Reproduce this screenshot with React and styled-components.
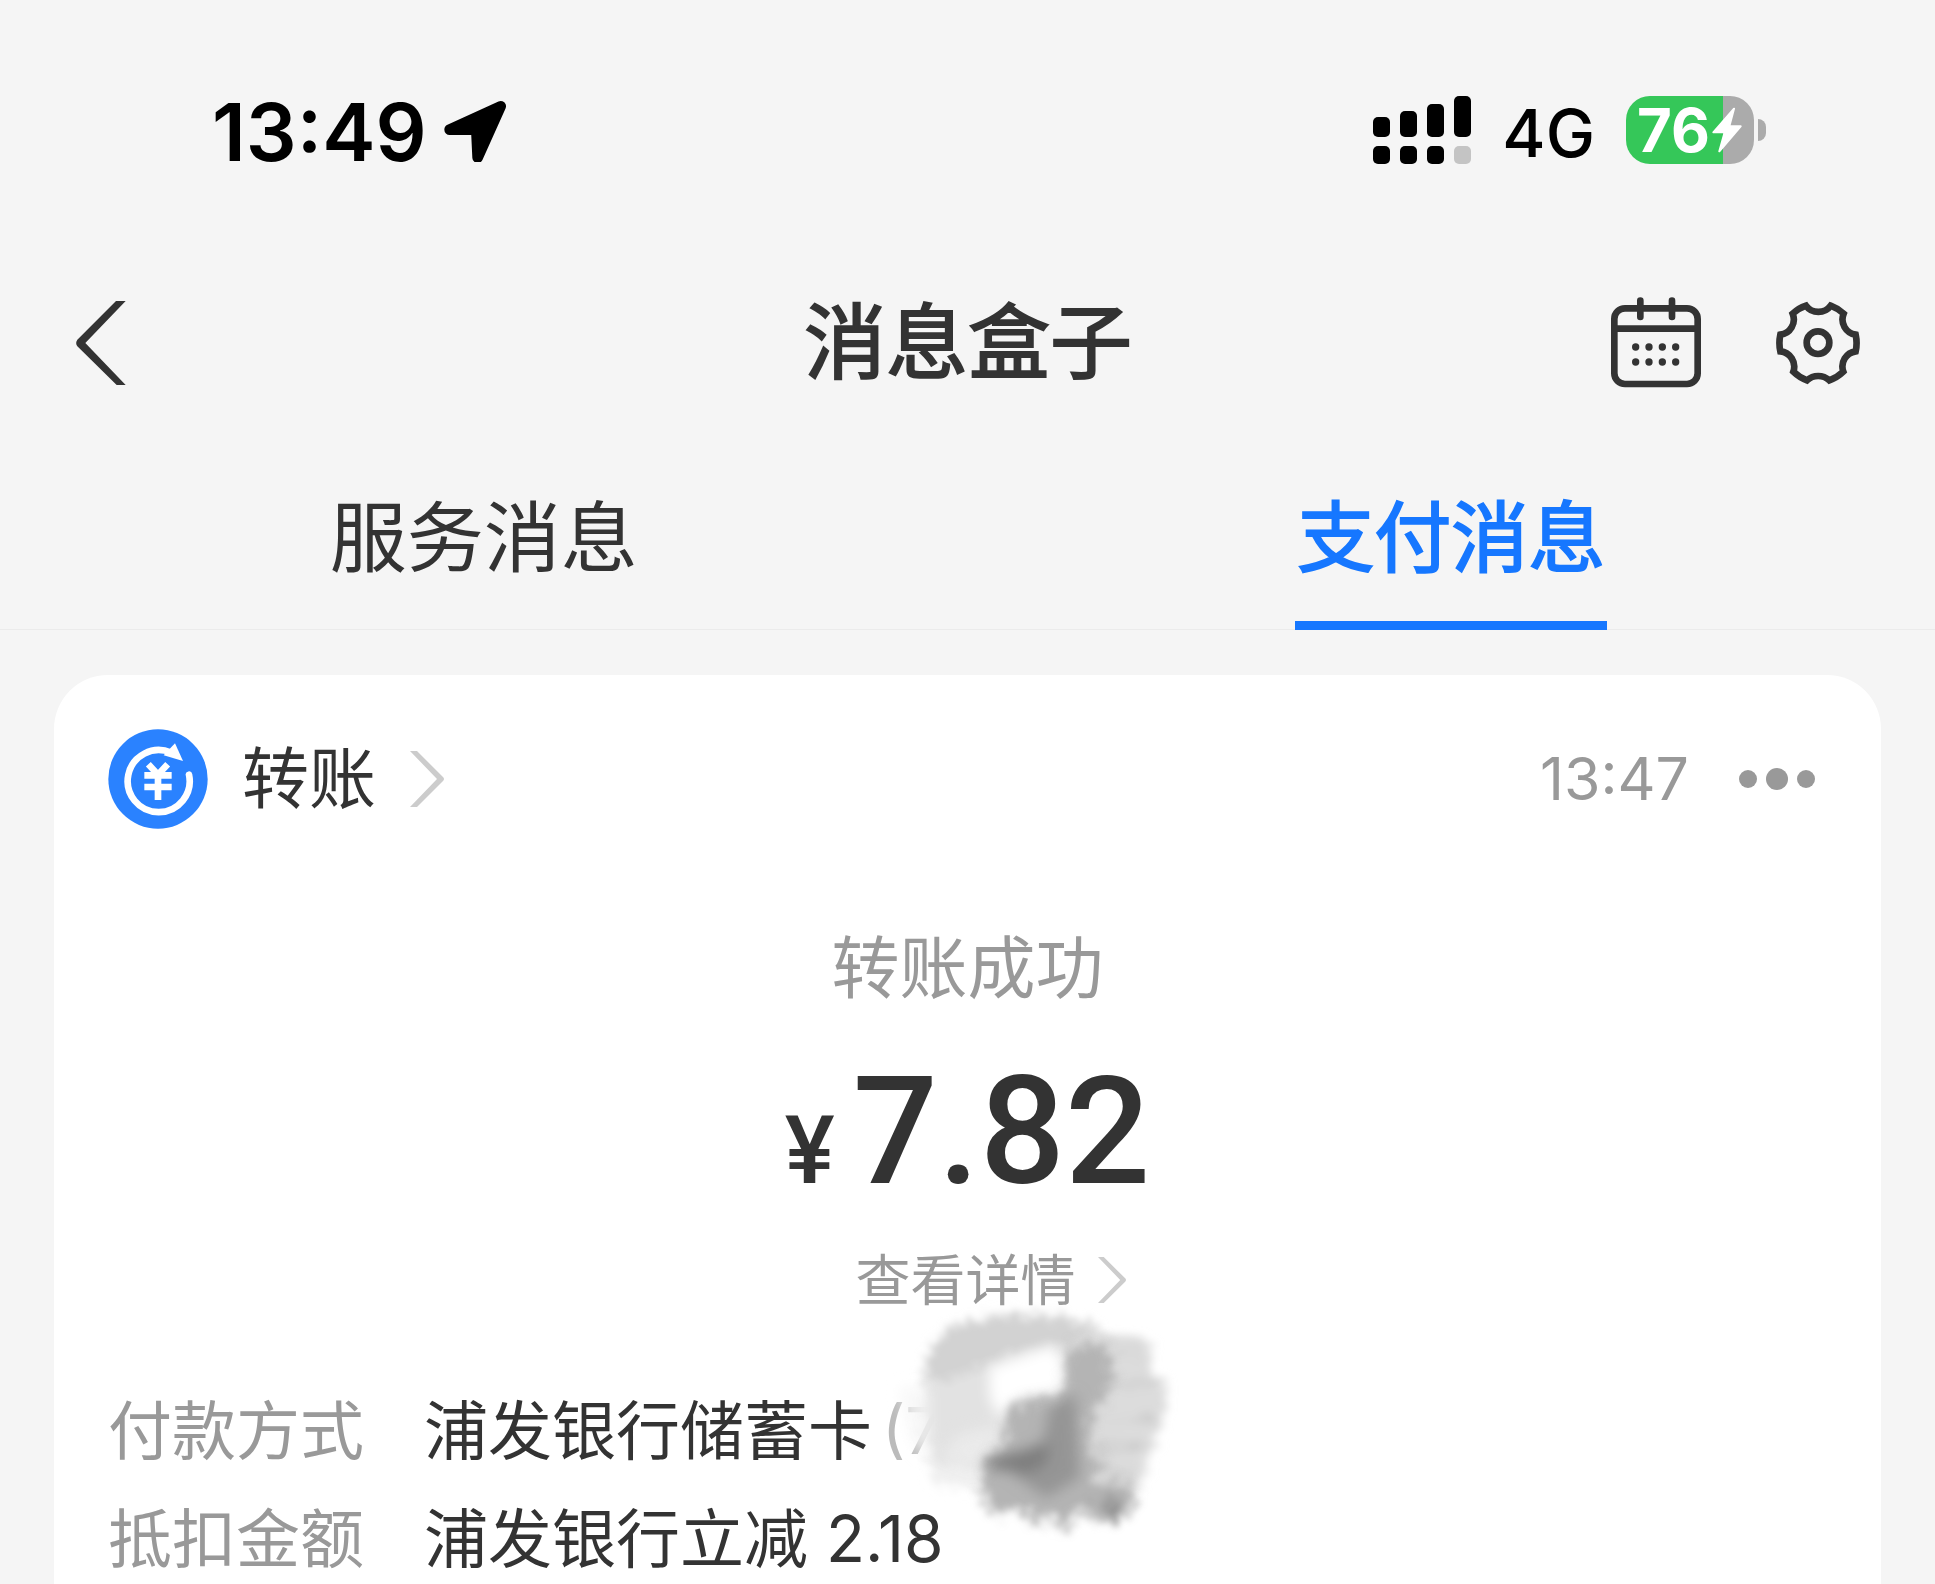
import React, { useState } from "react"
import styled, { createGlobalStyle } from "styled-components"

const tabs = ["服务消息", "支付消息"]

export default function App() {
  const [activeTab, setActiveTab] = useState("支付消息")
  return (
    <Page>
      <GlobalStyle />
      <StatusBar>
        <StatusGroup $gap={16}>
          <Clock>13:49</Clock>
          <LocationIcon />
        </StatusGroup>
        <StatusGroup $gap={31}>
          <SignalIcon />
          <Network>4G</Network>
          <Battery />
        </StatusGroup>
      </StatusBar>
      <NavBar>
        <NavSide>
          <IconButton aria-label="返回">
            <BackIcon />
          </IconButton>
        </NavSide>
        <Title>消息盒子</Title>
        <NavSide $end>
          <IconButton aria-label="日历">
            <CalendarIcon />
          </IconButton>
          <IconButton aria-label="设置">
            <GearIcon />
          </IconButton>
        </NavSide>
      </NavBar>
      <TabBar role="tablist">
        {tabs.map(tab => (
          <TabCell key={tab}>
            <Tab
              role="tab"
              aria-selected={tab === activeTab}
              $active={tab === activeTab}
              onClick={() => setActiveTab(tab)}
            >
              {tab}
            </Tab>
          </TabCell>
        ))}
      </TabBar>
      <MessageCard />
    </Page>
  )
}

function MessageCard() {
  return (
    <Card>
      <CardHeader>
        <Source href="#transfer">
          <TransferIcon />
          <span>转账</span>
          <Chevron width={34} height={58} />
        </Source>
        <Time>13:47</Time>
        <IconButton aria-label="更多">
          <MoreIcon />
        </IconButton>
      </CardHeader>
      <Result>转账成功</Result>
      <Amount>
        <Currency>¥</Currency>
        <span>7.82</span>
      </Amount>
      <Detail href="#detail">
        <span>查看详情</span>
        <Chevron width={28} height={48} />
      </Detail>
      <Fields>
        <Field>
          <dt>付款方式</dt>
          <dd>
            浦发银行储蓄卡
            <CardTail>
              (7
              <Smudge />
            </CardTail>
          </dd>
        </Field>
        <Field>
          <dt>抵扣金额</dt>
          <dd>浦发银行立减 2.18</dd>
        </Field>
      </Fields>
    </Card>
  )
}

function LocationIcon() {
  return (
    <svg width="64" height="64" viewBox="-2 -7 192 192" aria-hidden="true">
      <path
        d="M18 88 171 18 102 172 98 88Z"
        fill="#000"
        stroke="#000"
        strokeWidth="32"
        strokeLinejoin="round"
      />
    </svg>
  )
}

function SignalIcon() {
  const bars = [
    { x: 0, top: 21 },
    { x: 27, top: 15 },
    { x: 54, top: 8 },
    { x: 81, top: 0 },
  ]
  return (
    <svg width="98" height="68" viewBox="0 0 98 68" aria-hidden="true">
      {bars.map(({ x, top }, i) => (
        <g key={x}>
          <rect x={x} y={top} width="17" height={41 - top} rx="5" />
          <rect
            x={x}
            y="50"
            width="17"
            height="18"
            rx="5"
            fill={i === 3 ? "#c4c4c4" : "#000"}
          />
        </g>
      ))}
    </svg>
  )
}

function Battery() {
  return (
    <BatteryWrap>
      <BatteryBody>
        <span>76</span>
        <svg width="30" height="46" viewBox="0 0 90 138" aria-hidden="true">
          <path
            d="M66 5 4 76H38L22 133 86 58H52L66 5Z"
            fill="#fff"
            stroke="#fff"
            strokeWidth="6"
            strokeLinejoin="round"
          />
        </svg>
      </BatteryBody>
      <BatteryNub />
    </BatteryWrap>
  )
}

function BackIcon() {
  return (
    <svg width="50" height="84" viewBox="0 0 150 252" aria-hidden="true">
      <path
        d="M120 0H149L28 126 149 252H122L4 136Q-3 126 4 116Z"
        fill="#333"
      />
    </svg>
  )
}

function CalendarIcon() {
  return (
    <svg width="92" height="92" viewBox="90 80 276 276" aria-hidden="true">
      <g fill="none" stroke="#333" strokeWidth="20">
        <rect x="103" y="114" width="250" height="227" rx="32" />
        <path d="M103 175H352" />
        <path d="M181 91V140M276 91V140" strokeLinecap="round" />
      </g>
      {[230, 275].map(cy =>
        [167, 207, 247, 287].map(cx => (
          <circle key={`${cx}-${cy}`} cx={cx} cy={cy} r="11" fill="#333" />
        ))
      )}
    </svg>
  )
}

function GearIcon() {
  return (
    <svg width="84" height="84" viewBox="587 92 252 252" aria-hidden="true">
      <g fill="none" stroke="#333" strokeWidth="20">
        <path d="M677 106A46 46 0 0 0 751 106A116 116 0 0 1 790 130A46 46 0 0 0 826 193A116 116 0 0 1 826 243A46 46 0 0 0 789 304A116 116 0 0 1 747 330A50 50 0 0 0 680 330A116 116 0 0 1 639 304A46 46 0 0 0 600 243A116 116 0 0 1 600 193A46 46 0 0 0 637 130A116 116 0 0 1 677 106Z" />
        <circle cx="713" cy="217" r="34" />
      </g>
    </svg>
  )
}

function TransferIcon() {
  return (
    <svg width="100" height="100" viewBox="173 175 300 300" aria-hidden="true">
      <circle cx="323" cy="325" r="149" fill="#2a82ff" />
      <path
        d="M416 312A93 93 0 1 1 362 246"
        fill="none"
        stroke="#fff"
        strokeWidth="20"
        strokeLinecap="round"
      />
      <path d="M374 218 398 271 340 254Z" fill="#fff" />
      <path
        d="M294 281 323 312 352 281M323 308V388M282 314H364M282 349H364"
        fill="none"
        stroke="#fff"
        strokeWidth="20"
      />
    </svg>
  )
}

function Chevron({ width, height }) {
  return (
    <svg width={width} height={height} viewBox="0 0 34 58" aria-hidden="true">
      <path d="M0 1H7L33 27Q35 29 33 31L7 57H0L27 29Z" fill="#ccc" />
    </svg>
  )
}

function MoreIcon() {
  return (
    <svg width="76" height="22" viewBox="0 0 76 22" fill="#999" aria-hidden="true">
      <circle cx="9" cy="11" r="9" />
      <circle cx="38" cy="11" r="11" />
      <circle cx="67" cy="11" r="9" />
    </svg>
  )
}

// Finger-painted smear that hides the card number
function Smudge() {
  return (
    <SmudgeSvg viewBox="0 0 1080 810" aria-hidden="true">
      <defs>
        <filter id="rough" x="-20%" y="-20%" width="140%" height="140%">
          <feTurbulence
            type="fractalNoise"
            baseFrequency="0.05 0.06"
            numOctaves="3"
            seed="4"
          />
          <feDisplacementMap
            in="SourceGraphic"
            scale="110"
            xChannelSelector="R"
            yChannelSelector="G"
          />
          <feGaussianBlur stdDeviation="11" />
        </filter>
        <filter id="streak" x="-20%" y="-20%" width="140%" height="140%">
          <feTurbulence
            type="fractalNoise"
            baseFrequency="0.008 0.06"
            numOctaves="2"
            seed="9"
          />
          <feDisplacementMap
            in="SourceGraphic"
            scale="90"
            xChannelSelector="R"
            yChannelSelector="G"
          />
          <feGaussianBlur stdDeviation="12" />
        </filter>
        <filter id="soft" x="-40%" y="-40%" width="180%" height="180%">
          <feGaussianBlur stdDeviation="20" />
        </filter>
      </defs>
      <g filter="url(#rough)">
        <path
          d="M225 310 235 290 245 200 300 130 450 90 620 90 750 125 780 170V560H420L260 540 235 480Z"
          fill="#e2e2e2"
        />
        <path
          d="M235 290 250 200 300 130 450 95 620 95 750 130 700 210 620 180 440 230 340 280Z"
          fill="#d2d2d2"
        />
        <path d="M250 540H410V620L260 600Z" fill="#f0f0f0" />
      </g>
      <g filter="url(#streak)">
        <path
          d="M690 160 900 160 930 280 965 350 930 430 900 560 860 640 700 600Z"
          fill="#dcdcdc"
        />
        <path
          d="M720 190H880V205H720ZM740 300H920V312H740ZM760 400H930V412H760ZM720 480H900V494H720ZM740 560H870V572H740Z"
          fill="#ccc"
        />
      </g>
      <g filter="url(#soft)">
        <path d="M160 310H250V530L200 480Z" fill="#f6f6f6" opacity="0.8" />
        <path d="M430 250 620 185 655 240 650 320 520 340 460 400 430 340Z" fill="#fff" />
        <path d="M340 450 470 420 430 510 390 560 280 520Z" fill="#eaeaea" />
      </g>
      <g filter="url(#rough)">
        <path
          d="M665 190 780 180 800 300 740 400 720 480 800 580 870 620 850 690 780 720 710 680 650 755 620 690 570 730 530 680 430 690 405 600 410 530 480 490 475 400 530 345 650 340Z"
          fill="#b4b4b4"
        />
        <path d="M735 570H790V600H735Z" fill="#dadada" />
        <path d="M590 690H620V740H590ZM680 680H710V710H680Z" fill="#f4f4f4" />
        <path d="M750 660 830 640 800 720Z" fill="#8c8c8c" />
      </g>
      <g filter="url(#soft)">
        <path d="M610 370 690 330 700 580 600 640 500 570 590 480Z" fill="#959595" />
        <path d="M530 500 610 470 600 540 540 570 420 550 430 520Z" fill="#7e7e7e" />
      </g>
    </SmudgeSvg>
  )
}

const GlobalStyle = createGlobalStyle`
  * {
    box-sizing: border-box;
  }

  body {
    margin: 0;
    background: #f5f5f5;
    color: #333;
    font-family: Inter, "Noto Sans CJK SC", sans-serif;
  }

  svg {
    display: block;
    flex: none;
  }
`

const Page = styled.div`
  display: flex;
  flex-direction: column;
  min-height: 100vh;
`

const StatusBar = styled.header`
  display: flex;
  justify-content: space-between;
  align-items: center;
  height: 240px;
  padding: 20px 169px 0 212px;
  color: #000;
`

const StatusGroup = styled.div`
  display: flex;
  align-items: center;
  gap: ${({ $gap }) => $gap}px;
`

const Clock = styled.span`
  padding-top: 4px;
  font-size: 80px;
  font-weight: 600;
  line-height: 80px;
`

const Network = styled.span`
  padding-top: 6px;
  font-size: 66px;
  font-weight: 500;
  line-height: 80px;
`

const BatteryWrap = styled.div`
  display: flex;
  align-items: center;
  gap: 4px;
`

const BatteryBody = styled.div`
  display: flex;
  align-items: center;
  gap: 2px;
  width: 128px;
  height: 68px;
  padding-left: 11px;
  border-radius: 24px;
  background: linear-gradient(to right, #35c759 76%, #ababab 76%);
  color: #fff;
  font-size: 60px;
  font-weight: 700;
  line-height: 68px;
`

const BatteryNub = styled.div`
  width: 8px;
  height: 22px;
  border-radius: 0 8px 8px 0;
  background: #ababab;
`

const NavBar = styled.nav`
  display: grid;
  grid-template-columns: 1fr auto 1fr;
  align-items: center;
  height: 204px;
  padding: 1px 75px 0 76px;
`

const NavSide = styled.div`
  display: flex;
  justify-content: ${({ $end }) => ($end ? "flex-end" : "flex-start")};
  align-items: center;
  gap: 74px;
`

const IconButton = styled.button`
  display: flex;
  padding: 0;
  border: none;
  background: none;
  cursor: pointer;
`

const Title = styled.h1`
  margin: 0;
  font-size: 82px;
  font-weight: 400;
  line-height: 100px;
  -webkit-text-stroke: 2px currentColor;
`

const TabBar = styled.div`
  display: grid;
  grid-template-columns: 1fr 1fr;
  height: 186px;
  border-bottom: 1px solid #ebebeb;
`

const TabCell = styled.div`
  display: flex;
  justify-content: center;
`

const Tab = styled.button`
  height: 186px;
  padding: 11px 2px 0;
  border: none;
  border-bottom: 9px solid ${({ $active }) => ($active ? "#1677ff" : "transparent")};
  background: none;
  color: ${({ $active }) => ($active ? "#1677ff" : "#333")};
  font-family: inherit;
  font-size: 77px;
  font-weight: 400;
  line-height: 100px;
  -webkit-text-stroke: ${({ $active }) => ($active ? 2 : 0)}px currentColor;
  cursor: pointer;
`

const Card = styled.main`
  display: flex;
  flex: 1;
  flex-direction: column;
  margin: 45px 54px 0;
  padding: 54px 54px 0;
  border-radius: 54px 54px 0 0;
  background: #fff;
`

const CardHeader = styled.div`
  display: flex;
  align-items: center;
  height: 100px;
  padding-right: 12px;
`

const Source = styled.a`
  display: flex;
  align-items: center;
  gap: 34px;
  margin-right: auto;
  color: #333;
  font-size: 67px;
  line-height: 100px;
  text-decoration: none;
`

const Time = styled.time`
  margin-right: 50px;
  color: #999;
  font-size: 59px;
  line-height: 100px;
`

const Result = styled.p`
  margin: 91px 0 0;
  color: #999;
  font-size: 68px;
  line-height: 96px;
  text-align: center;
`

const Amount = styled.p`
  display: flex;
  justify-content: center;
  align-items: baseline;
  gap: 18px;
  height: 224px;
  margin: 0;
  font-family: Roboto, sans-serif;
  font-size: 150px;
  font-weight: 500;
  line-height: 232px;
`

const Currency = styled.span`
  font-size: 94px;
  line-height: 94px;
`

const Detail = styled.a`
  display: grid;
  grid-template-columns: 1fr auto 1fr;
  align-items: center;
  column-gap: 22px;
  padding-right: 4px;
  color: #999;
  font-size: 55px;
  line-height: 80px;
  text-decoration: none;

  span {
    grid-column: 2;
  }
`

const Fields = styled.dl`
  display: flex;
  flex-direction: column;
  gap: 16px;
  margin: 65px 0 0;
`

const Field = styled.div`
  display: flex;
  gap: 60px;
  font-size: 64px;
  line-height: 92px;

  dt {
    color: #999;
  }

  dd {
    margin: 0;
  }
`

const CardTail = styled.span`
  position: relative;
  margin-left: 10px;
  color: #bbb;
`

const SmudgeSvg = styled.svg`
  position: absolute;
  top: -108px;
  left: -36px;
  width: 360px;
  height: 270px;
`
